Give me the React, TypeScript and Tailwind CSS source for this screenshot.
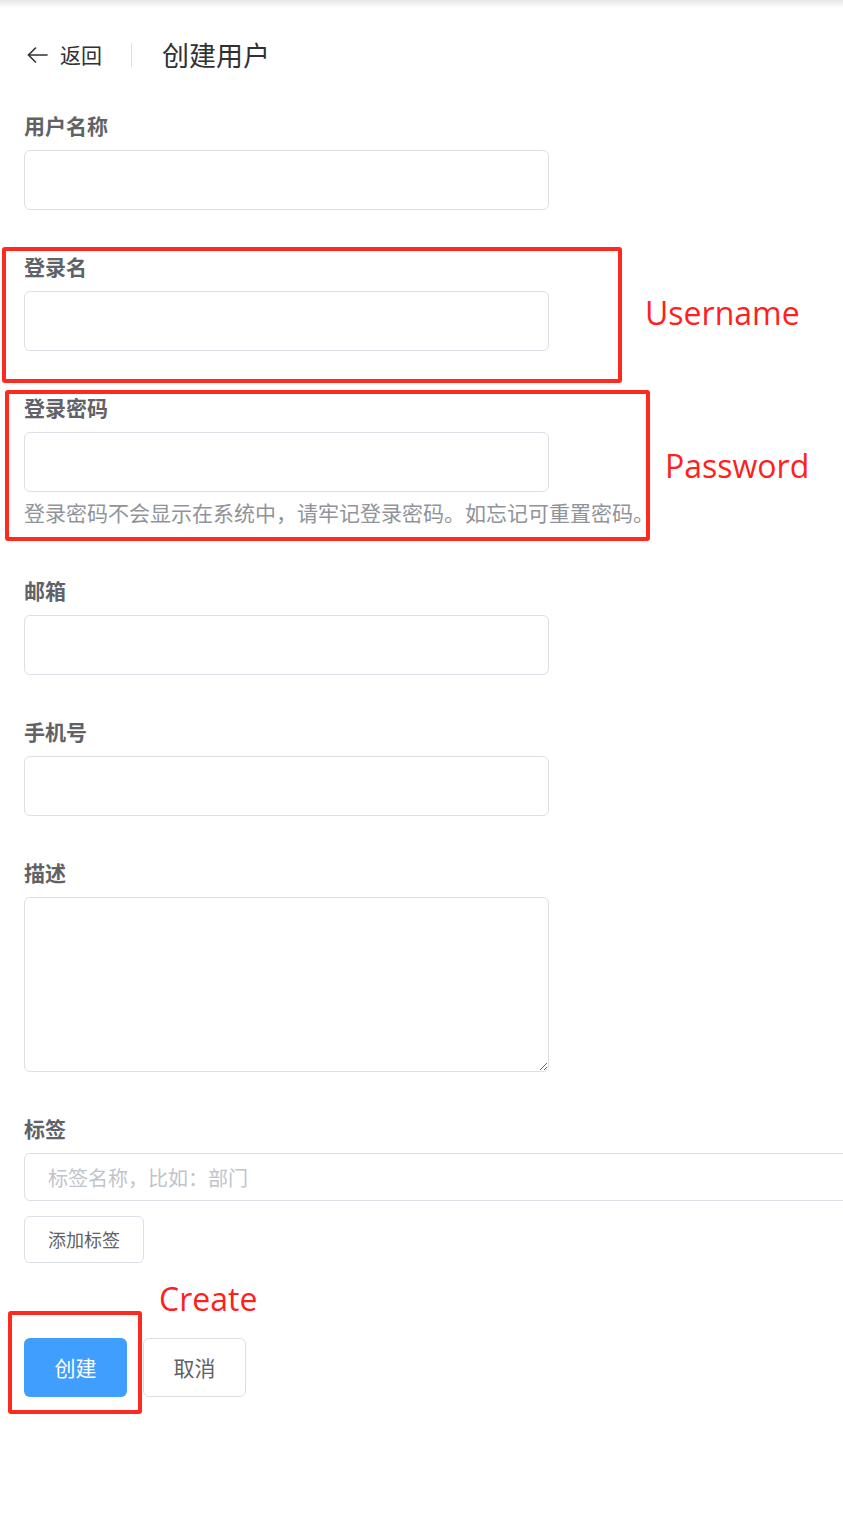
const cjk = "font-['Noto_Sans_CJK_SC',_'Noto_Sans',_sans-serif]";

function Field({ label, children, className = "" }: { label: string; children: React.ReactNode; className?: string }) {
  return (
    <div className={className}>
      <div className="text-[21px] leading-[24px] font-bold text-[#606266] mb-[13px]">{label}</div>
      {children}
    </div>
  );
}

const inputCls = "block w-[525px] h-[60px] border border-[#dcdfe6] rounded-[6px] bg-white outline-none px-[22px] text-[21px]";

export default function App() {
  return (
    <div className={`relative w-full min-h-[1540px] bg-white overflow-hidden ${cjk}`}>
      <div className="h-[8px] bg-gradient-to-b from-[#e8e8e8] to-white" />

      <header className="flex items-center h-[32px] mt-[31px] px-[27px]">
        <svg width="21" height="16" viewBox="0 0 21 16" fill="none" stroke="#303133" strokeWidth="1.6" strokeLinecap="round" strokeLinejoin="round">
          <path d="M20 8H1.5" />
          <path d="M8.5 1L1.5 8L8.5 15" />
        </svg>
        <span className="ml-[12px] text-[21px] text-[#303133]">返回</span>
        <span className="w-px h-[24px] bg-[#dcdfe6] ml-[29px] mr-[30px]" />
        <h1 className="text-[27px] text-[#303133]">创建用户</h1>
      </header>

      <form className="px-[24px] mt-[42px]">
        <Field label="用户名称" className="mb-[44px]">
          <input className={inputCls} />
        </Field>
        <Field label="登录名" className="mb-[44px]">
          <input className={inputCls} />
        </Field>
        <Field label="登录密码" className="mb-[51px]">
          <input type="password" className={inputCls} />
          <p className="mt-[5px] text-[21px] leading-[30px] text-[#909399] whitespace-nowrap">登录密码不会显示在系统中，请牢记登录密码。如忘记可重置密码。</p>
        </Field>
        <Field label="邮箱" className="mb-[44px]">
          <input className={inputCls} />
        </Field>
        <Field label="手机号" className="mb-[44px]">
          <input className={inputCls} />
        </Field>
        <Field label="描述" className="mb-[44px]">
          <textarea className="block w-[525px] h-[175px] border border-[#dcdfe6] rounded-[6px] bg-white outline-none px-[22px] py-[8px] text-[21px] resize-y" />
        </Field>
        <Field label="标签">
          <input
            placeholder="标签名称，比如：部门"
            className="block w-[840px] h-[48px] border border-[#dcdfe6] rounded-[6px] bg-white outline-none pl-[23px] text-[20px] placeholder:text-[#c0c4cc]"
          />
          <button type="button" className="mt-[15px] h-[47px] px-[23px] border border-[#dcdfe6] rounded-[6px] bg-white text-[18px] text-[#606266]">添加标签</button>
        </Field>

        <div className="flex mt-[75px]">
          <button type="button" className="w-[103px] h-[59px] rounded-[6px] bg-[#409eff] text-white text-[21px]">创建</button>
          <button type="button" className="ml-[16px] w-[103px] h-[59px] rounded-[6px] border border-[#dcdfe6] bg-white text-[#606266] text-[21px]">取消</button>
        </div>
      </form>

      <div className="absolute left-[2px] top-[247px] w-[620px] h-[136px] border-4 border-[#ff2a1f] rounded-[3px]" />
      <div className="absolute left-[5px] top-[390px] w-[645px] h-[151px] border-4 border-[#ff2a1f] rounded-[3px]" />
      <div className="absolute left-[8px] top-[1311px] w-[134px] h-[103px] border-4 border-[#ff2a1f] rounded-[3px]" />
      <span className="absolute left-[645px] top-[293px] text-[32px] leading-[40px] text-[#ff1f1f] font-['Open_Sans',_sans-serif]">Username</span>
      <span className="absolute left-[665px] top-[446px] text-[32px] leading-[40px] text-[#ff1f1f] font-['Open_Sans',_sans-serif]">Password</span>
      <span className="absolute left-[159px] top-[1279px] text-[32px] leading-[40px] text-[#ff1f1f] font-['Open_Sans',_sans-serif]">Create</span>
    </div>
  );
}
